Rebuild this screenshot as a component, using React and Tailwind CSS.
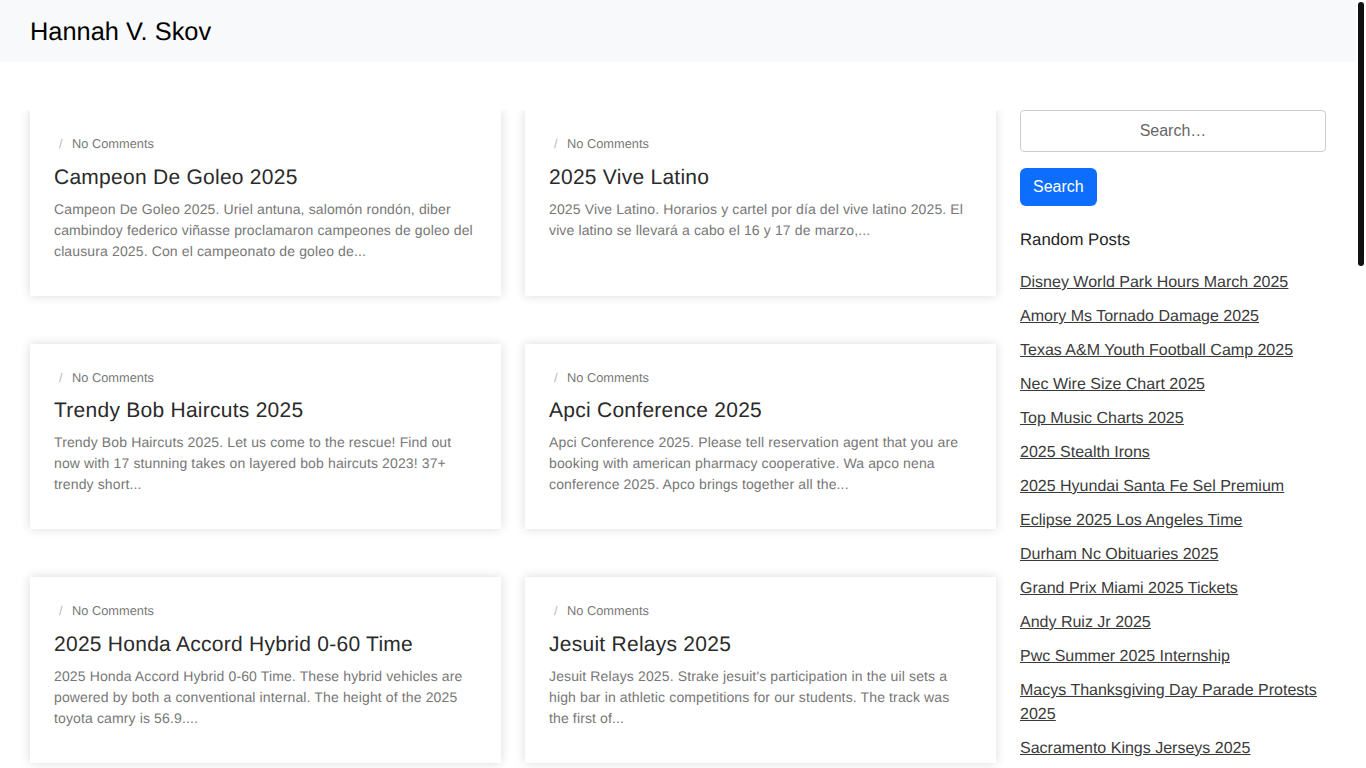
const POSTS = [
  {
    title: "Campeon De Goleo 2025",
    text: "Campeon De Goleo 2025. Uriel antuna, salomón rondón, diber cambindoy federico viñasse proclamaron campeones de goleo del clausura 2025. Con el campeonato de goleo de...",
  },
  {
    title: "2025 Vive Latino",
    text: "2025 Vive Latino. Horarios y cartel por día del vive latino 2025. El vive latino se llevará a cabo el 16 y 17 de marzo,...",
  },
  {
    title: "Trendy Bob Haircuts 2025",
    text: "Trendy Bob Haircuts 2025. Let us come to the rescue! Find out now with 17 stunning takes on layered bob haircuts 2023! 37+ trendy short...",
  },
  {
    title: "Apci Conference 2025",
    text: "Apci Conference 2025. Please tell reservation agent that you are booking with american pharmacy cooperative. Wa apco nena conference 2025. Apco brings together all the...",
  },
  {
    title: "2025 Honda Accord Hybrid 0-60 Time",
    text: "2025 Honda Accord Hybrid 0-60 Time. These hybrid vehicles are powered by both a conventional internal. The height of the 2025 toyota camry is 56.9....",
  },
  {
    title: "Jesuit Relays 2025",
    text: "Jesuit Relays 2025. Strake jesuit's participation in the uil sets a high bar in athletic competitions for our students. The track was the first of...",
  },
];

const LINKS = [
  "Disney World Park Hours March 2025",
  "Amory Ms Tornado Damage 2025",
  "Texas A&M Youth Football Camp 2025",
  "Nec Wire Size Chart 2025",
  "Top Music Charts 2025",
  "2025 Stealth Irons",
  "2025 Hyundai Santa Fe Sel Premium",
  "Eclipse 2025 Los Angeles Time",
  "Durham Nc Obituaries 2025",
  "Grand Prix Miami 2025 Tickets",
  "Andy Ruiz Jr 2025",
  "Pwc Summer 2025 Internship",
  "Macys Thanksgiving Day Parade Protests 2025",
  "Sacramento Kings Jerseys 2025",
];

function PostCard({ post }) {
  return (
    <article className="h-[185.5px] bg-white px-6 pt-6 shadow-[0_0_10px_rgba(0,0,0,0.15)]">
      <div className="flex h-[19.5px] items-center pl-[5px] text-[12.8px] text-[#777]">
        <span className="text-[#bbb]">/</span>
        <span className="ml-[9.5px]">No Comments</span>
      </div>
      <h2 className="mt-[11px] text-[21px] leading-[25px] tracking-[0.26px] text-[#2a2a2a]">{post.title}</h2>
      <p className="mt-[9px] text-[14px] leading-[21px] tracking-[0.13px] text-[#777]">{post.text}</p>
    </article>
  );
}

export default function App() {
  return (
    <div className="flex h-screen overflow-hidden bg-white font-['Liberation_Sans',Arial,sans-serif] antialiased [text-rendering:geometricPrecision]">
      <div className="w-[1356px] shrink-0">
        <header className="flex h-[62px] items-center bg-[#f8f9fa] px-[30px]">
          <a className="pt-[2px] text-[25.4px] text-black">Hannah V. Skov</a>
        </header>
        <main className="flex gap-6 px-[30px] pt-12">
          <div className="grid w-[966px] shrink-0 grid-cols-2 content-start gap-x-6 gap-y-12 [clip-path:inset(0_-30px_-30px_-30px)]">
            {POSTS.map((post) => (
              <PostCard key={post.title} post={post} />
            ))}
          </div>
          <aside className="w-[306px] shrink-0">
            <input
              placeholder="Search…"
              className="block h-[42px] w-full rounded-[4px] border border-[#ccc] bg-white text-center text-[16px] text-[#555] placeholder:text-[#666]"
            />
            <button className="mt-4 h-[38px] rounded-md bg-[#0d6efd] px-[13px] text-[16px] text-white">Search</button>
            <h3 className="mt-[22px] text-[16.8px] leading-[24px] text-[#222]">Random Posts</h3>
            <ul className="mt-[19px] flex flex-col gap-[10px]">
              {LINKS.map((link) => (
                <li key={link} className="text-[16px] leading-[24px] text-[#3a3a3a] underline">
                  <a>{link}</a>
                </li>
              ))}
            </ul>
          </aside>
        </main>
      </div>
      <div className="flex-1 bg-white pt-[2px] pl-[2px]">
        <div className="h-[264px] w-[6px] rounded-[3px] bg-[#111]"></div>
      </div>
    </div>
  );
}
